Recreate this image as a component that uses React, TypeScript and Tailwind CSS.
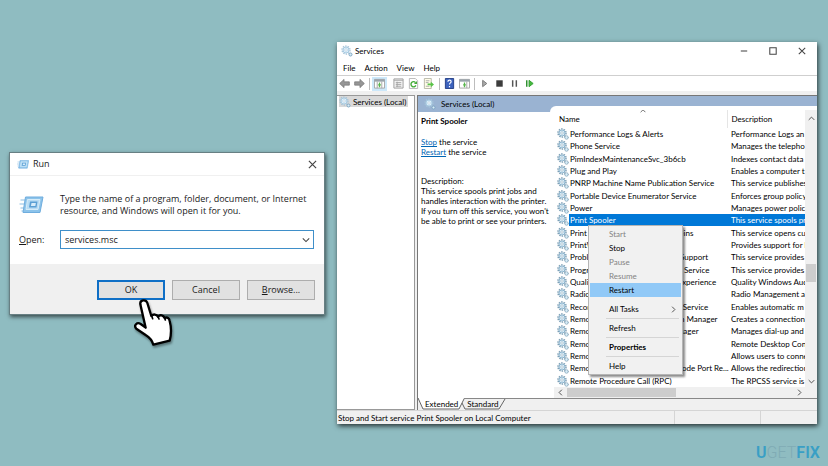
import type { ReactNode } from "react";

const services = [
  ["Performance Logs & Alerts", "Performance Logs an"],
  ["Phone Service", "Manages the telepho"],
  ["PimIndexMaintenanceSvc_3b6cb", "Indexes contact data"],
  ["Plug and Play", "Enables a computer t"],
  ["PNRP Machine Name Publication Service", "This service publishes"],
  ["Portable Device Enumerator Service", "Enforces group policy"],
  ["Power", "Manages power polic"],
  ["Print Spooler", "This service spools pr"],
  ["Print Device Configuration Plug-ins", "This service opens cu"],
  ["PrintWorkflow_3b6cb", "Provides support for l"],
  ["Problem Reports Control Panel Support", "This service provides"],
  ["Program Compatibility Assistant Service", "This service provides"],
  ["Quality Windows Audio Video Experience", "Quality Windows Aud"],
  ["Radio Management Service", "Radio Management a"],
  ["Recommended Troubleshooting Service", "Enables automatic m"],
  ["Remote Access Auto Connection Manager", "Creates a connection"],
  ["Remote Access Connection Manager", "Manages dial-up and"],
  ["Remote Desktop Configuration", "Remote Desktop Con"],
  ["Remote Desktop Services", "Allows users to conne"],
  ["Remote Desktop Service UserMode Port Re...", "Allows the redirection"],
  ["Remote Procedure Call (RPC)", "The RPCSS service is t"],
];

function Gear({ className = "size-3" }: { className?: string }) {
  return (
    <svg viewBox="0 0 24 24" fill="none" className={`shrink-0 ${className}`}>
      <circle cx="10" cy="10" r="8" stroke="#7d9fb5" strokeWidth="3" strokeDasharray="3 2" />
      <circle cx="10" cy="10" r="6" fill="#d9edf8" stroke="#8fb6cf" strokeWidth="2" />
      <circle cx="10" cy="10" r="2.5" fill="#fff" stroke="#7d9fb5" />
      <circle cx="19" cy="19" r="3.5" fill="#d9edf8" stroke="#6f93aa" strokeWidth="2" strokeDasharray="2 1" />
    </svg>
  );
}

// Title bars and tree nodes use the paler variant of the gear
function PaleGear() {
  return (
    <svg viewBox="0 0 24 24" fill="none" className="size-3 shrink-0">
      <circle cx="10" cy="10" r="8" stroke="#a5c3d8" strokeWidth="2.5" strokeDasharray="3 2" />
      <circle cx="10" cy="10" r="6" fill="#dceffa" stroke="#a9cbe2" strokeWidth="2" />
      <circle cx="10" cy="10" r="2.5" fill="#fff" stroke="#9dbdd2" />
      <circle cx="19" cy="19" r="3" fill="#d9edf8" stroke="#7ea6c2" strokeWidth="2" />
    </svg>
  );
}

function RunIcon({ className }: { className: string }) {
  return (
    <svg viewBox="0 0 24 18" className={`shrink-0 ${className}`}>
      <path d="M1 4H7M0 8H6M1 12H5M2 15H6" stroke="#8dc0e4" strokeWidth="1.2" />
      <path d="M6 1H23.5L20.5 16.5H3.5Z" fill="#8cc3ea" stroke="#6fadde" />
      <path d="M8 3.5H20.5L18.5 13.5H6.5Z" fill="#b8dcf4" stroke="#d6ecf9" />
      <path d="M10.5 5.5H18L17 11.5H9.5Z" fill="#5b9fd4" />
      <path d="M12 7H16.4L15.8 10H11.4Z" fill="#d8edfa" />
    </svg>
  );
}

function Glyph({ d, className = "size-2" }: { d: string; className?: string }) {
  return (
    <svg viewBox="0 0 10 10" fill="none" stroke="#444" strokeWidth="1.3" className={`shrink-0 ${className}`}>
      <path d={d} />
    </svg>
  );
}

function ToolButton({
  label,
  active = false,
  children,
}: {
  label: string;
  active?: boolean;
  children: ReactNode;
}) {
  return (
    <button
      type="button"
      aria-label={label}
      className={`flex h-[14px] w-[15px] items-center justify-center ${active ? "bg-[#cce8fa]" : ""}`}
    >
      <svg viewBox="0 0 12 12" fill="none" className="size-[11px]">
        {children}
      </svg>
    </button>
  );
}

function Separator() {
  return <span className="h-[12px] w-px bg-[#bdbdbd]" />;
}

function PanelIcon({ flip = false }: { flip?: boolean }) {
  return (
    <>
      <path d="M.5 1.5H11.5V11H.5Z" fill="#fff" stroke="#a3a3a3" />
      <path d="M.5 1.5H11.5V4H.5Z" fill="#98a3ab" />
      <path d={flip ? "M8.5 4V11" : "M3.5 4V11M8.5 4V11"} stroke="#a3a3a3" />
      <path d="M6 5V10M4.5 7.5H7.5" stroke="#57b54c" strokeWidth="1.4" />
    </>
  );
}

function Toolbar() {
  return (
    <div className="flex h-[16px] items-center border-t border-[#cfcfcf]">
      <ToolButton label="Back">
        <path d="M.7 6L5.5 1.5V4.2H11.3V7.8H5.5V10.5Z" fill="#969696" stroke="#777" strokeWidth=".8" />
      </ToolButton>
      <ToolButton label="Forward">
        <path d="M11.3 6L6.5 1.5V4.2H.7V7.8H6.5V10.5Z" fill="#969696" stroke="#777" strokeWidth=".8" />
      </ToolButton>
      <div className="flex items-center gap-[2px] pl-[2px]">
        <Separator />
        <ToolButton label="Show console tree" active>
          <PanelIcon />
        </ToolButton>
      </div>
      <div className="flex items-center pl-[4px]">
        <ToolButton label="Properties">
          <path d="M1 1H11V11H1Z" fill="#f4f4f4" stroke="#999" />
          <path d="M1 2.5H11M3 5H9M3 7H9M3 9H9M4.5 4V10" stroke="#a5a5a5" />
        </ToolButton>
        <ToolButton label="Refresh">
          <path d="M1.5.5H8L10.5 3V11.5H1.5Z" fill="#fff" stroke="#b5b5b5" />
          <path d="M8.2 5A2.8 2.8 0 1 0 8.6 8" stroke="#45ad3a" strokeWidth="1.5" />
          <path d="M9.8 3.2V6.5H6.5Z" fill="#45ad3a" />
        </ToolButton>
        <ToolButton label="Export list">
          <path d="M1.5.5H9V11.5H1.5Z" fill="#fffde8" stroke="#b5b5a5" />
          <path d="M3 3H7M3 5H6M3 9H7" stroke="#aaa" />
          <path d="M5 6H8.5V4L12 7L8.5 10V8H5Z" fill="#59c348" />
        </ToolButton>
      </div>
      <div className="flex items-center pl-[3px]">
        <Separator />
        <span className="w-[2px]" />
        <ToolButton label="Help">
          <path d="M1.5.5H10.5V11.5H1.5Z" fill="#3c62bd" stroke="#203b82" />
          <path d="M4.3 4C4.3 1.8 7.8 1.8 7.8 4C7.8 5.4 6 5.3 6 7.2M6 8.6V10" stroke="#fff" strokeWidth="1.3" />
        </ToolButton>
        <ToolButton label="Show action pane">
          <PanelIcon flip />
        </ToolButton>
      </div>
      <div className="flex items-center pl-[2px]">
        <Separator />
        <span className="w-[2px]" />
        <ToolButton label="Start service">
          <path d="M4 2.5L8.5 6L4 9.5Z" fill="#aaa" stroke="#777" />
        </ToolButton>
        <ToolButton label="Stop service">
          <path d="M2.5 2.5H9.5V9.5H2.5Z" fill="#3c3c3c" />
        </ToolButton>
        <ToolButton label="Pause service">
          <path d="M4 2.5V9.5M8 2.5V9.5" stroke="#555" strokeWidth="1.6" />
        </ToolButton>
        <ToolButton label="Restart service">
          <path d="M3 2.5V9.5" stroke="#2f8f2f" strokeWidth="1.6" />
          <path d="M5.5 2.5L10 6L5.5 9.5Z" fill="#45b83c" stroke="#2f9f2f" />
        </ToolButton>
      </div>
    </div>
  );
}

function MenuItem({ label, className = "", children }: { label: string; className?: string; children?: ReactNode }) {
  return (
    <button
      type="button"
      role="menuitem"
      className={`flex h-[14px] w-full items-center justify-between pr-1 pl-[19px] text-left disabled:text-[#838383] ${className}`}
      disabled={["Start", "Pause", "Resume"].includes(label)}
    >
      {label}
      {children}
    </button>
  );
}

function ContextMenu() {
  const line = "mr-[2px] ml-[16px] my-[2px]";
  return (
    <div
      role="menu"
      className="absolute top-[115px] left-[34px] w-[95px] border border-[#b5b5b5] bg-[#f1f1f1] p-px shadow-[2px_2px_2px_rgba(0,0,0,0.45)]"
    >
      <MenuItem label="Start" />
      <MenuItem label="Stop" />
      <MenuItem label="Pause" />
      <MenuItem label="Resume" />
      <MenuItem label="Restart" className="bg-[#91c9f7]" />
      <hr className={`${line} border-transparent`} />
      <MenuItem label="All Tasks">
        <Glyph d="M3 1L7 5L3 9" className="size-[7px]" />
      </MenuItem>
      <hr className={`${line} border-[#d5d5d5]`} />
      <MenuItem label="Refresh" />
      <hr className={`${line} border-[#d5d5d5]`} />
      <MenuItem label="Properties" className="font-bold" />
      <hr className={`${line} border-[#d5d5d5]`} />
      <MenuItem label="Help" />
    </div>
  );
}

function ServiceList() {
  return (
    <div className="relative flex min-w-0 flex-1 flex-col">
      <div className="flex min-h-0 flex-1">
        <div className="min-w-0 flex-1 overflow-hidden">
          <table className="h-full w-full table-fixed border-collapse whitespace-nowrap">
            <thead>
              <tr className="h-[18px] text-left">
                <th className="relative w-[173px] border-r border-[#e5e5e5] p-0 pl-[5px] font-normal">
                  Name
                  <span className="absolute -top-[2px] left-1/2">
                    <Glyph d="M1 7L5 3L9 7" className="size-[6px]" />
                  </span>
                </th>
                <th className="p-0 pl-[4px] font-normal">Description</th>
              </tr>
            </thead>
            <tbody>
              {services.map(([name, description]) => {
                const selected = name === "Print Spooler";
                return (
                  <tr key={name}>
                    <td className="p-0">
                      <div className="flex items-center pl-[3px]">
                        <Gear />
                        <span className={`flex-1 pl-px leading-[12px] ${selected ? "bg-[#0078d7] text-white" : ""}`}>
                          {name}
                        </span>
                      </div>
                    </td>
                    <td className="overflow-hidden p-0">
                      <div className={`pl-[4px] leading-[12px] ${selected ? "bg-[#0078d7] text-white" : ""}`}>
                        {description}
                      </div>
                    </td>
                  </tr>
                );
              })}
            </tbody>
          </table>
        </div>
        <div className="flex w-[12px] flex-col items-center bg-[#f0f0f0] pt-[5px] pb-[2px]">
          <Glyph d="M1 7L5 3L9 7" className="size-[7px]" />
          <div className="flex-[140]" />
          <div className="h-[18px] w-[10px] bg-[#cdcdcd]" />
          <div className="flex-[95]" />
          <Glyph d="M1 3L5 7L9 3" className="size-[7px]" />
        </div>
      </div>
      <div className="flex h-[11px] items-center bg-[#f0f0f0] pr-[14px] pl-[3px]">
        <Glyph d="M7 1L3 5L7 9" className="size-[7px]" />
        <div className="ml-[3px] h-[9px] w-[109px] bg-[#cdcdcd]" />
        <div className="flex-1" />
        <Glyph d="M3 1L7 5L3 9" className="size-[7px]" />
      </div>
      <ContextMenu />
    </div>
  );
}

function ServicesWindow() {
  return (
    <section
      aria-label="Services"
      className="flex min-w-0 flex-1 flex-col bg-white font-[Lato,sans-serif] text-[8px] leading-[10px] text-black shadow-[1px_2px_5px_rgba(0,0,0,0.75)]"
    >
      <header className="flex h-[18px] items-center pr-[11px] pl-[4px]">
        <PaleGear />
        <h2 className="flex-1 pl-[2px]">Services</h2>
        <div className="flex gap-[21px]">
          <button type="button" aria-label="Minimize">
            <Glyph d="M1 5H9" />
          </button>
          <button type="button" aria-label="Maximize">
            <Glyph d="M1 1H9V9H1Z" />
          </button>
          <button type="button" aria-label="Close">
            <Glyph d="M1 1L9 9M9 1L1 9" />
          </button>
        </div>
      </header>
      <nav className="flex h-[15px] items-center gap-[9px] pl-[6px]">
        <button type="button">File</button>
        <button type="button">Action</button>
        <button type="button">View</button>
        <button type="button">Help</button>
      </nav>
      <Toolbar />
      <div className="flex min-h-0 flex-1 bg-[#f0f0f0] pt-[4px]">
        <aside className="w-[78px] border-t border-r border-b border-[#999] bg-white pl-[2px]">
          <div className="flex h-[11px] w-[69px] items-center bg-[#d9d9d9]">
            <PaleGear />
            <span className="pl-[2px] whitespace-nowrap">Services (Local)</span>
          </div>
        </aside>
        <div className="ml-[2px] flex min-w-0 flex-1 flex-col border-t border-l border-[#777]">
          <div className="flex min-h-0 flex-1 flex-col bg-[#9ab3d2]">
            <div className="flex h-[16px] shrink-0 items-center gap-[5px] pl-[6px]">
              <PaleGear />
              <span>Services (Local)</span>
            </div>
            <div className="-mt-[6px] flex min-h-0 flex-1">
              <div className="mt-[6px] w-[132px] shrink-0 bg-white pt-[4px] pl-[3px]">
                <h3 className="font-bold">Print Spooler</h3>
                <p className="pt-[11px]">
                  <a href="#stop" className="text-[#0066b4] underline">Stop</a> the service
                  <br />
                  <a href="#restart" className="text-[#0066b4] underline">Restart</a> the service
                </p>
                <p className="pt-[19px] whitespace-nowrap">
                  Description:
                  <br />
                  This service spools print jobs and
                  <br />
                  handles interaction with the printer.
                  <br />
                  If you turn off this service, you won't
                  <br />
                  be able to print or see your printers.
                </p>
              </div>
              <div className="flex min-w-0 flex-1 rounded-tl-[6px] bg-white pt-[4px] pl-[4px]">
                <ServiceList />
              </div>
            </div>
          </div>
          <div className="relative h-[12px] border-t border-[#888] bg-[#f0f0f0]">
            <svg viewBox="0 0 90 12" className="absolute -top-px left-0 h-[12px] w-[90px]">
              <path d="M0 0H46L41 11H5Z" fill="#fff" />
              <path d="M0 0L5 11H41L46 1M44 5L47 11H81L87 1" fill="none" stroke="#666" />
            </svg>
            <div className="relative flex gap-[9px] pl-[7px]">
              <button type="button">Extended</button>
              <button type="button">Standard</button>
            </div>
          </div>
        </div>
      </div>
      <footer className="flex h-[14px] items-center border-t border-[#d5d5d5] bg-[#f0f0f0]">
        <span className="flex-1 pl-px">Stop and Start service Print Spooler on Local Computer</span>
        <span className="h-full w-[86px] border-l border-[#d5d5d5]" />
        <span className="h-full w-[57px] border-l border-[#d5d5d5]" />
      </footer>
    </section>
  );
}

function RunDialog() {
  return (
    <section
      aria-label="Run"
      className="relative mt-[110px] w-[316px] shrink-0 self-start border border-[#677f83] bg-white text-[9px] leading-[12px] text-[#1a1a1a] shadow-[1px_2px_4px_rgba(0,0,0,0.6)]"
    >
      <header className="flex h-[23px] items-center border-b border-[#f0f0f0] px-[7px]">
        <RunIcon className="h-[9px] w-[12px]" />
        <h2 className="flex-1 pl-[4px]">Run</h2>
        <button type="button" aria-label="Close">
          <Glyph d="M1 1L9 9M9 1L1 9" className="size-[9px]" />
        </button>
      </header>
      <div className="px-[9px] pt-[17px] pb-[15px]">
        <div className="flex items-center gap-[16px]">
          <RunIcon className="h-[18px] w-[25px]" />
          <p className="whitespace-nowrap">
            Type the name of a program, folder, document, or Internet
            <br />
            resource, and Windows will open it for you.
          </p>
        </div>
        <div className="flex items-center pt-[13px]">
          <label htmlFor="command" className="w-[41px]">
            <u>O</u>pen:
          </label>
          <div className="flex h-[19px] w-[254px] items-center border border-[#3f8fc9] pr-[3px] pl-[4px]">
            <input id="command" defaultValue="services.msc" className="min-w-0 flex-1 outline-none" />
            <Glyph d="M1 3L5 7L9 3" />
          </div>
        </div>
      </div>
      <div className="flex h-[50px] items-start justify-end gap-[7px] bg-[#f0f0f0] pt-[16px] pr-[9px]">
        <button type="button" className="h-[20px] w-[68px] border-2 border-[#0f6fc6] bg-[#e1e1e1]">
          OK
        </button>
        <button type="button" className="h-[20px] w-[68px] border border-[#adadad] bg-[#e1e1e1]">
          Cancel
        </button>
        <button type="button" className="h-[20px] w-[68px] border border-[#adadad] bg-[#e1e1e1]">
          <u>B</u>rowse...
        </button>
      </div>
      <svg
        viewBox="20 20 129 150"
        className="absolute top-[144px] left-[122px] h-[50px] w-[43px] drop-shadow-[1px_2px_1px_rgba(0,0,0,0.4)]"
      >
        <path
          d="M45 42C43 28 62 26 66 38L78 77C84 70 94 72 98 79C104 72 114 74 118 83C126 79 132 84 133 92C138 110 138 132 133 151L84 163C80 150 72 141 62 135L33 115C24 105 35 94 46 101L61 112Z"
          fill="#fff"
          stroke="#000"
          strokeWidth="7"
          strokeLinejoin="round"
        />
        <path d="M79 76L82 85M98 79L101 86M118 83L120 89" stroke="#000" strokeWidth="5" strokeLinecap="round" />
      </svg>
    </section>
  );
}

export default function App() {
  return (
    <main className="relative flex h-screen gap-3 bg-[#8fbcc1] pt-[42px] pr-[11px] pb-[42px] pl-[9px] font-['Open_Sans','Noto_Sans',sans-serif]">
      <RunDialog />
      <ServicesWindow />
      <div className="absolute right-[8px] bottom-[4px] font-[Roboto,sans-serif] text-[16px] leading-[18px] font-semibold text-[#399fc5]">
        U<span className="font-light text-[#7fabb4]">GET</span>FIX
      </div>
    </main>
  );
}
